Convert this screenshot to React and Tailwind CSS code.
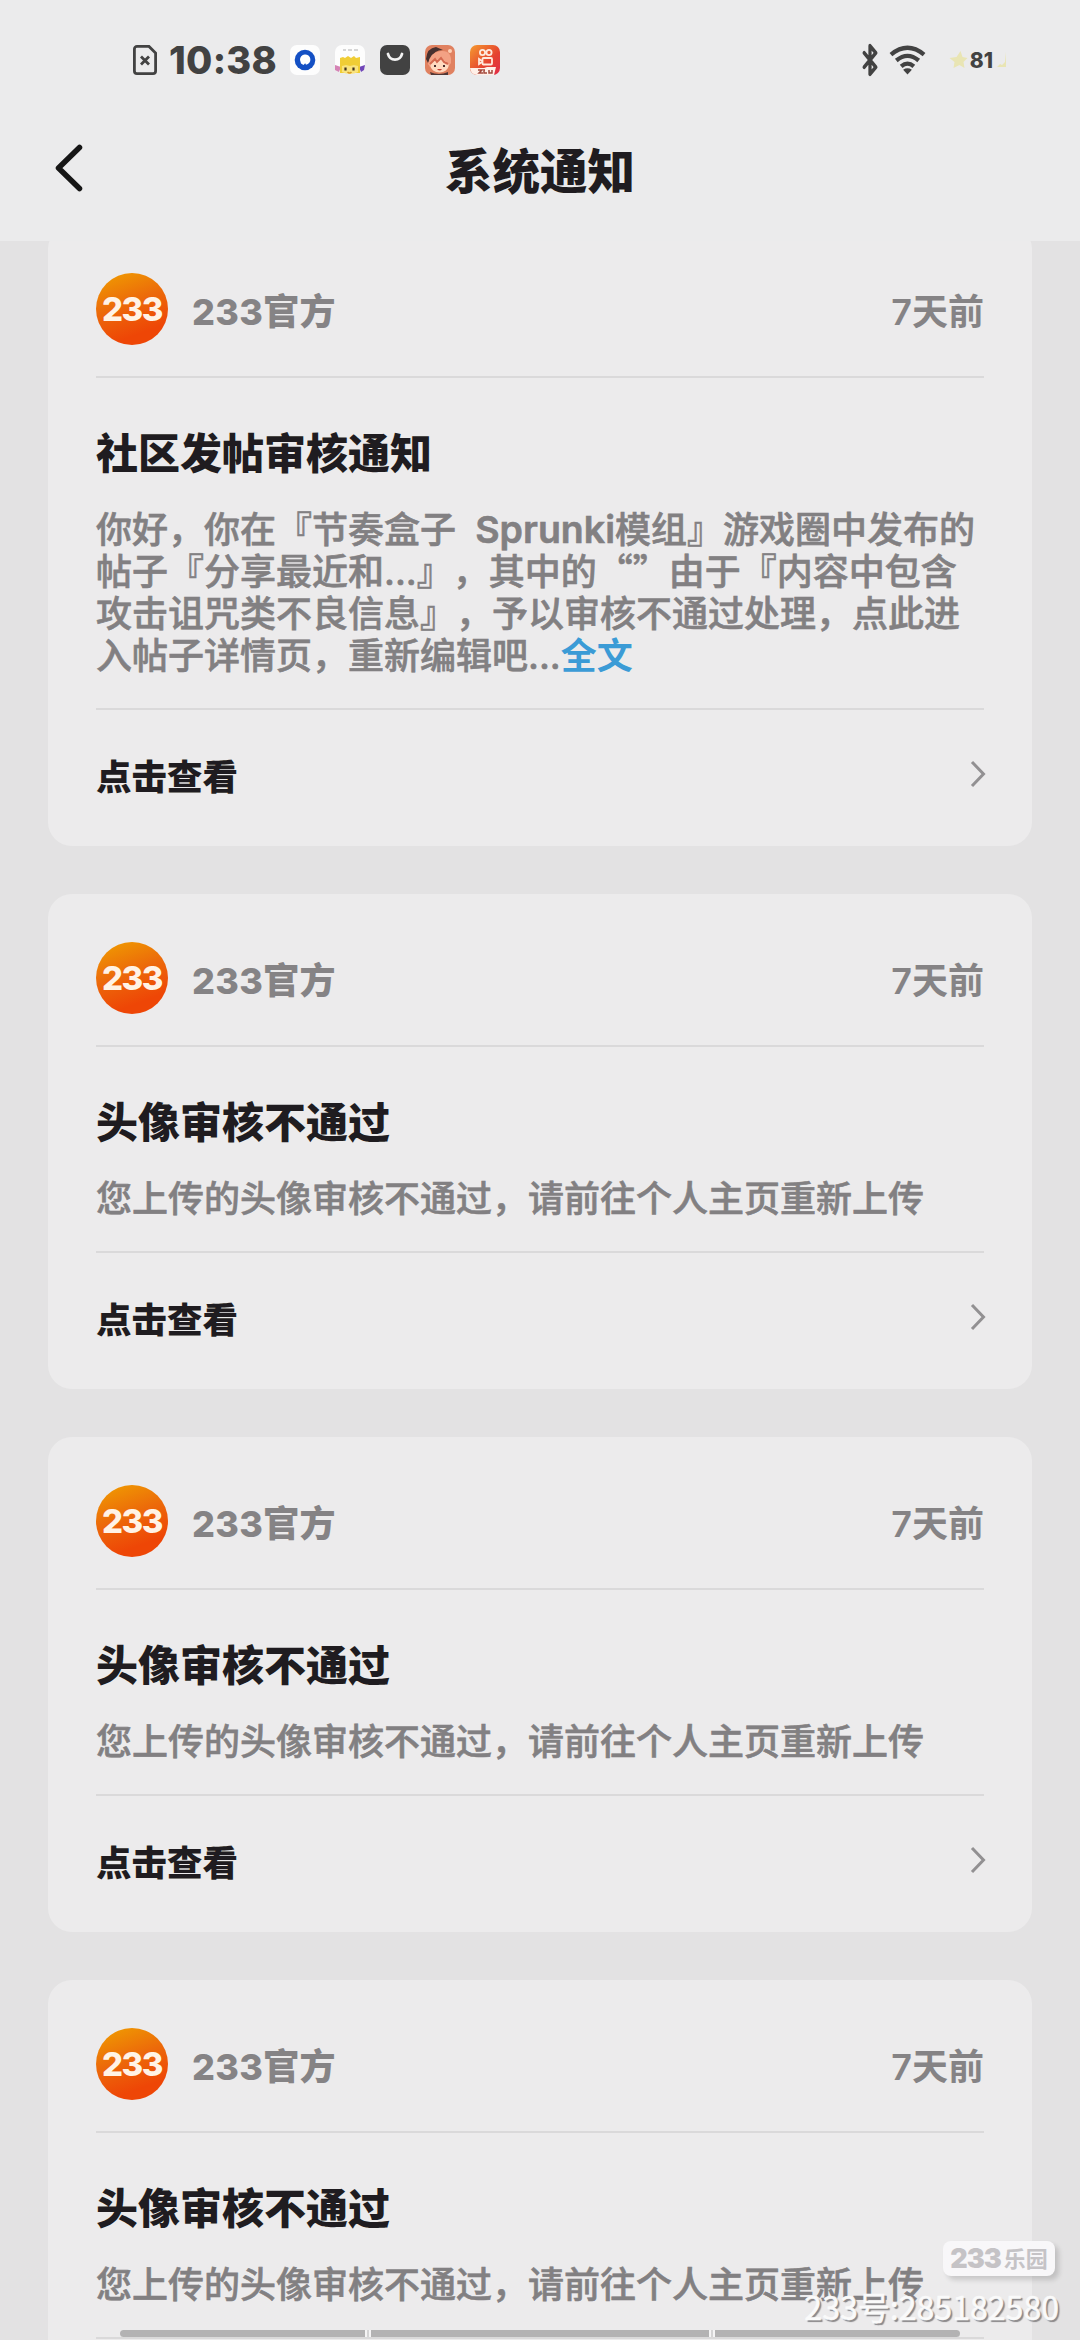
import {Bluetooth} from "lucide-react";

const notices = [
    {
        id: 1,
        title: "社区发帖审核通知",
        lines: [
            ["你好，你在『节奏盒子  ", "Sprunki", "模组』游戏圈中发布的"],
            ["帖子『分享最近和...』，其中的", "“”", "由于『内容中包含"],
            ["攻击诅咒类不良信息』，予以审核不通过处理，点此进"],
            ["入帖子详情页，重新编辑吧..."],
        ],
        more: true,
        action: "点击查看",
    },
    {id: 2, title: "头像审核不通过", lines: [["您上传的头像审核不通过，请前往个人主页重新上传"]], action: "点击查看"},
    {id: 3, title: "头像审核不通过", lines: [["您上传的头像审核不通过，请前往个人主页重新上传"]], action: "点击查看"},
    {id: 4, title: "头像审核不通过", lines: [["您上传的头像审核不通过，请前往个人主页重新上传"]]},
];

const inlineStyles = {
    "Sprunki": "text-[37.5px] leading-none font-semibold",
    "“”": "leading-none font-['Noto_Sans_CJK_SC']",
};

const AppIcons = () => (
    <div className="flex items-center gap-[15px]">
        <svg className="h-[30px] w-[30px]" viewBox="0 0 30 30">
            <rect width="30" height="30" rx="7" fill="#fdfdfd"/>
            <circle cx="15" cy="15" r="10.3" fill="#1450c4"/>
            <path d="M10 15a5.200 5.200 0 1 1 6 4.800l-.8-1.600-1.700 1.800-2.500-1.500z" fill="#fff"/>
        </svg>
        <svg className="h-[30px] w-[30px]" viewBox="0 0 30 30">
            <rect width="30" height="27" rx="7" fill="#fdfdfd"/>
            <path d="M8 5h3M13 5h4M19 5h4" stroke="#c9c9c9" strokeWidth="1.5"/>
            <path d="M0 20l6 2-2 5-4-2z" fill="#d583b5"/>
            <path d="M30 20l-6 2 2 5 3-2z" fill="#7046b8"/>
            <path d="M5 13l3-1 2 1 3-2 3 2 3-2 2 2 4-1v16H5z" fill="#f0cd35"/>
            <path d="M7 21l4-1 4 1 4-1 4 1v6q-8 4-16 0z" fill="#f9e37c"/>
            <path d="M10.500 22.500v3M18.500 22.500v3" stroke="#40311f" strokeWidth="2.2"/>
            <path d="M12.500 27q2 2 4 0" stroke="#d99b26" strokeWidth="1.5" fill="none"/>
        </svg>
        <svg className="h-[30px] w-[30px]" viewBox="0 0 30 30">
            <rect width="30" height="30" rx="7" fill="#424242"/>
            <path d="M8 9c2 7.500 12 7.500 14 0" stroke="#f2f2f2" strokeWidth="2.800" strokeLinecap="round" fill="none"/>
        </svg>
        <svg className="h-[30px] w-[30px]" viewBox="0 0 30 30">
            <rect width="30" height="30" rx="7" fill="#e08160"/>
            <path d="M1 14Q2 3 11 2l7 3q-9 0-12 8l-3 5z" fill="#47302f"/>
            <path d="M3 19Q5 7 16 6t10 12l-3 4H5z" fill="#f3a184"/>
            <ellipse cx="14.500" cy="21" rx="9" ry="6.500" fill="#ffd9bf"/>
            <path d="M5 19l5-5 2 3 4-4 3 4 4 2" stroke="#d4684f" strokeWidth="2" fill="none"/>
            <path d="M10 20v2M19 20v2" stroke="#482d2c" strokeWidth="2"/>
            <path d="M12 24q3 3 5 0z" fill="#c53f35"/>
            <path d="M5 27q9 4 18 0v3H6z" fill="#503837"/>
            <circle cx="25" cy="6" r="2" fill="#ffd0b5"/>
        </svg>
        <svg className="h-[30px] w-[30px]" viewBox="0 0 30 30">
            <defs>
                <linearGradient id="video" x1="0" y1="0" x2="1" y2="1">
                    <stop stopColor="#f59a2f"/>
                    <stop offset=".6" stopColor="#e5412f"/>
                    <stop offset="1" stopColor="#e12c4a"/>
                </linearGradient>
            </defs>
            <rect width="30" height="30" rx="7" fill="url(#video)"/>
            <g fill="none" stroke="#ffe9dc" strokeWidth="1.800">
                <circle cx="12.500" cy="7.500" r="2.600"/>
                <circle cx="19" cy="7.500" r="2.600"/>
                <rect x="12.500" y="13" width="9.500" height="6.500" rx="1"/>
                <path d="M12 16l-3-2v5l3-2"/>
            </g>
            <path d="M0 23h14l3-1h9l-2 8H7q-6 0-7-7z" fill="#fff0e8"/>
            <path d="M8 25h4l-3 3h4M15 25h-1v3h3M19 25v3h3v-3" stroke="#a4483c" strokeWidth="1.500" fill="none"/>
        </svg>
    </div>
);

const StatusBar = () => (
    <div className="flex h-[120px] items-center pr-[72px] pl-[133px] text-[#424242]">
        <svg className="h-[30px] w-6" viewBox="0 0 24 30" fill="none" stroke="currentColor" strokeWidth="2.800">
            <path d="M4 1.400h12L22.600 8v18a2.600 2.600 0 0 1-2.600 2.600H4A2.600 2.600 0 0 1 1.400 26V4A2.600 2.600 0 0 1 4 1.400z"/>
            <path d="M8 11.500l8 8M16 11.500l-8 8"/>
        </svg>
        <div className="ml-3 w-[121px] text-[38px] leading-none font-extrabold tracking-[0.3px]">10:38</div>
        <AppIcons/>
        <div className="ml-auto flex items-center">
            <Bluetooth className="h-[34px] w-[28px]" strokeWidth={2.8} preserveAspectRatio="none"/>
            <svg className="ml-[5px] h-[30px] w-[37px]" viewBox="0 0 38 30" fill="none" stroke="currentColor" strokeWidth="4.400">
                <path d="M2 9.500Q19-4.500 36 9.500"/>
                <path d="M7.500 15.500Q19 6 30.500 15.500"/>
                <path d="M12.500 21.500Q19 16 25.500 21.500"/>
                <path d="M14.500 25q4.500-3 9 0L19 29.800z" fill="currentColor" stroke="none"/>
            </svg>
            <svg className="ml-[23px] h-[18px] w-[19px]" viewBox="0 0 18 18">
                <path d="M11 0l2 6 5 1-4 4 1 6-5-3-6 3 1-6-5-4 7-1z" fill="#e9e5b4"/>
            </svg>
            <span className="ml-[2px] text-[21px] leading-none font-extrabold">81</span>
            <svg className="ml-[4px] h-[18px] w-[11px]" viewBox="0 0 11 18">
                <path d="M9 1v15H0l3-3 2 1 3-3z" fill="#e9e5b4"/>
            </svg>
        </div>
    </div>
);

const Header = () => (
    <header className="relative z-10 h-[241px] shrink-0 bg-[#ebebec]">
        <StatusBar/>
        <div className="grid h-[100px] grid-cols-3 items-center">
            <svg className="mb-[5px] ml-[54px] h-[50px] w-[30px]" viewBox="0 0 30 50" fill="none" stroke="#161616" strokeWidth="5.500" strokeLinecap="round" strokeLinejoin="round">
                <path d="M25.500 4.500L4.500 25l21 20.500"/>
            </svg>
            <h1 className="pt-[3px] text-center text-[47.5px] leading-none font-black text-[#1f1c20]">系统通知</h1>
        </div>
    </header>
);

const NoticeCard = ({title, lines, more, action}) => (
    <article className="shrink-0 rounded-[24px] bg-[#ecebec] px-12 pt-12">
        <div className="flex h-[72px] items-center">
            <div className="flex h-[72px] w-[72px] items-center justify-center rounded-full bg-linear-[160deg,#f0a000_0%,#ec6a0a_42%,#ee4606_78%]">
                <span className="text-[33px] leading-none font-extrabold tracking-[-1.5px] text-[#fff3e6]">233</span>
            </div>
            <span className="ml-6 pt-[5px] text-[36px] font-extrabold tracking-[0.3px] text-[#858385]">233官方</span>
            <span className="ml-auto pt-[5px] text-[36px] font-semibold text-[#858385]">7天前</span>
        </div>
        <div className="mt-[31px] h-[2px] bg-[#dad9da]"/>
        <h2 className="mt-[51px] h-[50px] text-[42px] leading-[50px] font-extrabold text-[#1f1c20]">{title}</h2>
        <div className="mt-[30px] text-[36px] leading-[42px] font-medium whitespace-pre text-[#828082] [-webkit-text-stroke:0.6px] [text-spacing-trim:space-all]">
            {lines.map((parts, i) => (
                <p key={i} className="h-[42px]">
                    {parts.map((part) => (
                        <span key={part} className={inlineStyles[part]}>{part}</span>
                    ))}
                    {more && i === lines.length - 1 && <span className="font-bold text-[#3b9bd6] [-webkit-text-stroke:0px]">全文</span>}
                </p>
            ))}
        </div>
        <div className="mt-[31px] h-[2px] bg-[#dad9da]"/>
        <div className="flex h-[136px] items-center justify-between">
            {action && (
                <>
                    <span className="text-[35.5px] font-extrabold text-[#1f1c20]">{action}</span>
                    <svg className="-mr-[2px] mb-[8px] h-[28px] w-4" viewBox="0 0 16 28" fill="none" stroke="#929092" strokeWidth="3">
                        <path d="M2 2l11.500 12L2 26"/>
                    </svg>
                </>
            )}
        </div>
    </article>
);

const Watermark = () => (
    <>
        <div className="absolute top-[2241px] left-[943px] z-20 flex h-[35px] w-[112px] items-center justify-center rounded-[8px] bg-[#f8f7f9] text-[#c5c3c6] shadow-[4px_4px_5px_rgba(0,0,0,0.15)]">
            <span className="mr-[3px] text-[27px] leading-none font-black tracking-[-1px]">233</span>
            <span className="text-[22px] leading-none font-bold">乐园</span>
        </div>
        <div className="absolute top-[2282px] right-[21px] z-20 font-['Noto_Sans_CJK_SC'] text-[32.1px] leading-[48px] text-[#fafafa] [-webkit-text-stroke:0.5px] [text-shadow:2px_2px_1px_#8a888a]">
            233号:285182580
        </div>
    </>
);

const App = () => (
    <div lang="zh-CN" className="relative flex h-[2340px] w-[1080px] flex-col overflow-hidden bg-[#e3e2e3] font-['Inter','Noto_Sans_CJK_SC',sans-serif]">
        <Header/>
        <main className="-mt-4 flex flex-col gap-12 px-12">
            {notices.map((n) => (
                <NoticeCard key={n.id} {...n}/>
            ))}
        </main>
        <div className="absolute top-[2330px] left-[120px] z-10 flex h-[7px] w-[840px] gap-[2px] overflow-hidden rounded-full bg-[#f5f4f5]">
            <div className="w-[245px] bg-[#b3b2b3]"/>
            <div className="w-[2px] bg-[#d5d4d5]"/>
            <div className="w-[338px] bg-[#b3b2b3]"/>
            <div className="w-[2px] bg-[#d5d4d5]"/>
            <div className="flex-1 bg-[#b3b2b3]"/>
        </div>
        <Watermark/>
    </div>
);

export default App;
